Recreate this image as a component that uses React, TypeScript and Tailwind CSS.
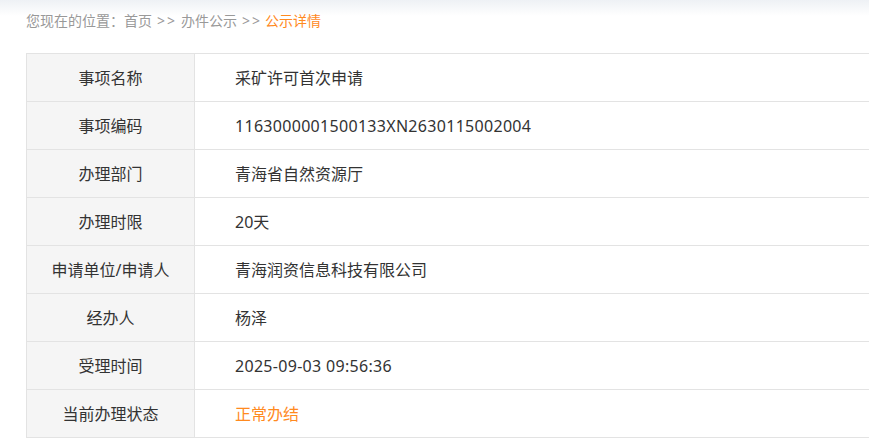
import React from "react";

const rows: { label: string; value: string; orange?: boolean; latin?: boolean }[] = [
  { label: "事项名称", value: "采矿许可首次申请" },
  { label: "事项编码", value: "1163000001500133XN2630115002004", latin: true },
  { label: "办理部门", value: "青海省自然资源厅" },
  { label: "办理时限", value: "20天" },
  { label: "申请单位/申请人", value: "青海润资信息科技有限公司" },
  { label: "经办人", value: "杨泽" },
  { label: "受理时间", value: "2025-09-03 09:56:36", latin: true },
  { label: "当前办理状态", value: "正常办结", orange: true },
];

export default function App() {
  return (
    <div
      className="w-[869px] h-[438px] overflow-hidden bg-white"
      style={{ fontFamily: '"Noto Sans", "Noto Sans CJK SC", sans-serif' }}
    >
      <div className="bg-gradient-to-b from-[#eef1f5] to-white h-[16px] -mb-[16px]" />
      <div className="relative pl-[26px] pt-[11px] h-[53px] text-[14px] leading-[20px] text-[#999]">
        您现在的位置：首页<span className="ml-[5px] mr-[4px] tracking-[2px]">&gt;&gt;</span>办件公示
        <span className="ml-[5px] mr-[3px] tracking-[2px]">&gt;&gt;</span>
        <span className="text-[#ff8a1f]">公示详情</span>
      </div>
      <div className="ml-[26px] w-[1000px] border-t border-l border-[#e3e3e3]">
        {rows.map((r) => (
          <div key={r.label} className="flex h-[48px] border-b border-[#e3e3e3]">
            <div className="w-[168px] shrink-0 border-r border-[#e3e3e3] bg-[#f5f5f5] flex items-center justify-center text-[16px] text-[#333]">
              {r.label}
            </div>
            <div
              className={`flex items-center pl-[40px] text-[16px] ${r.orange ? "text-[#ff8a1f]" : "text-[#333]"} ${r.latin ? "tracking-[0.3px]" : ""}`}
            >
              {r.value}
            </div>
          </div>
        ))}
      </div>
    </div>
  );
}
